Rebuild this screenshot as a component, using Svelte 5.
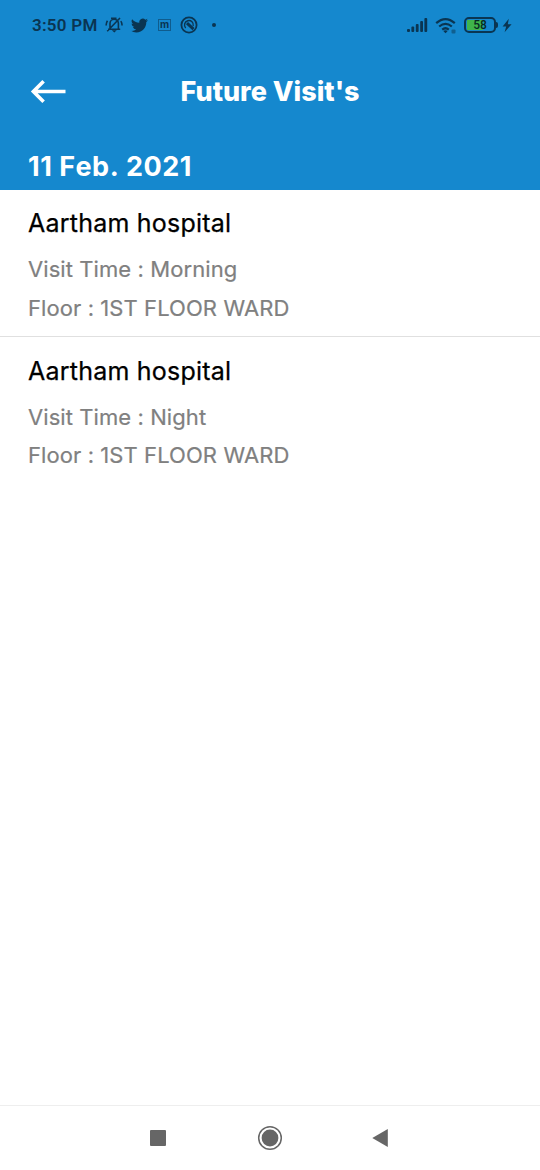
<script>
  const date = '11 Feb. 2021';
  const battery = 58;

  const visits = [
    { hospital: 'Aartham hospital', time: 'Morning', floor: '1ST FLOOR WARD' },
    { hospital: 'Aartham hospital', time: 'Night', floor: '1ST FLOOR WARD' }
  ];
</script>

<div class="screen">
  <header>
    <div class="status">
      <span class="clock">3:50 PM</span>
      <!-- muted bell -->
      <svg class="bell" width="18" height="18" viewBox="0 0 18 18" fill="none" stroke="currentColor" stroke-width="1.6">
        <path d="M3 13.2h12.2M5 13V7.5a4.2 4.2 0 0 1 8.4 0V13M6 2.2h5.5M2.2 15.2L15 2M1.2 9.5Q1 7 2.5 4.8M17 9.5q.2-2.5-1.2-4.4" />
        <path d="M6.8 14.2h5L9.3 16.6z" fill="currentColor" stroke="none" />
      </svg>
      <svg class="bird" width="17" height="17" viewBox="0 0 24 24" fill="currentColor">
        <path d="M23.95 4.57a10 10 0 0 1-2.82.78 4.96 4.96 0 0 0 2.16-2.73c-.95.56-2 .96-3.13 1.19a4.92 4.92 0 0 0-8.38 4.48A13.9 13.9 0 0 1 1.64 3.16a4.92 4.92 0 0 0 1.52 6.57 4.9 4.9 0 0 1-2.23-.61v.06a4.92 4.92 0 0 0 3.95 4.83 5 5 0 0 1-2.21.08 4.94 4.94 0 0 0 4.6 3.42A9.87 9.87 0 0 1 0 19.54a13.99 13.99 0 0 0 7.55 2.21c9.14 0 14.31-7.72 14.01-14.65a10 10 0 0 0 2.39-2.53z" />
      </svg>
      <span class="app-m">m</span>
      <svg class="ring" width="18" height="18" viewBox="0 0 18 18" fill="none" stroke="currentColor">
        <circle cx="9" cy="9" r="7.6" stroke-width="1.8" />
        <path d="M5.7 12A4.4 4.4 0 1 1 13.2 10" stroke-width="1.4" />
        <path d="M7 7.2l6.5 6" stroke-width="3" />
      </svg>
      <i class="dot"></i>
      <span class="grow"></span>
      <svg class="signal" width="22" height="16" viewBox="0 0 22 16" fill="currentColor">
        <rect x="1" y="12" width="3" height="3" rx="1" />
        <rect x="5.4" y="9.5" width="2.8" height="5.5" rx="1" />
        <rect x="9.8" y="7" width="2.8" height="8" rx="1" />
        <rect x="14.2" y="4" width="2.8" height="11" rx="1" />
        <rect x="18.4" y="1" width="2.8" height="14" rx="1" />
      </svg>
      <svg class="wifi" width="22" height="17" viewBox="0 0 22 17" fill="none" stroke="currentColor" stroke-width="2.2">
        <path d="M1.2 6.2q9.3-8.2 18.6 0M4.2 9.5q6.3-5.4 12.6 0M7.2 12.6q3.3-2.7 6.6 0" />
        <path d="M8.3 14q2.2-1.5 4.4 0l-2.2 2.3z" fill="currentColor" stroke="none" />
        <rect x="16.5" y="12.5" width="4" height="4" rx="1" fill="currentColor" stroke="none" opacity=".5" />
      </svg>
      <span class="battery">
        <i class="level" style="width: {battery}%"></i>
        <b>{battery}</b>
      </span>
      <i class="cap"></i>
      <svg class="bolt" width="10" height="15" viewBox="0 0 10 15" fill="currentColor">
        <path d="M6.8.8L.6 8.4h3.6L2.6 14.2 9.6 6.2H5.8z" />
      </svg>
    </div>

    <div class="bar">
      <button aria-label="Back">
        <svg width="36" height="26" viewBox="0 0 36 26" fill="none" stroke="#fff" stroke-width="3.6">
          <path d="M3 12.5h32.5M13.6 2.3L3.4 12.5l10.2 10.2" />
        </svg>
      </button>
      <h1>Future Visit's</h1>
    </div>
    <h2>{date}</h2>
  </header>

  <main>
    {#each visits as visit}
      <article>
        <h3>{visit.hospital}</h3>
        <p>Visit Time : {visit.time}</p>
        <p>Floor : {visit.floor}</p>
      </article>
    {/each}
  </main>

  <nav>
    <svg width="16" height="16" viewBox="0 0 16 16"><rect width="16" height="16" rx="1" /></svg>
    <svg class="home" width="26" height="26" viewBox="0 0 26 26">
      <circle cx="13" cy="13" r="11.3" fill="none" stroke="#666" stroke-width="1.5" />
      <circle cx="13" cy="13" r="8.4" />
    </svg>
    <svg width="16" height="20" viewBox="0 0 16 20"><path d="M.3 10L15.8 1v18z" /></svg>
  </nav>
</div>

<style>
  :global(body) { margin: 0; background: #fff; }
  .screen { display: flex; flex-direction: column; height: 1170px; font-family: Inter, sans-serif; font-feature-settings: 'calt' 0; }
  h1, h2, h3, p { margin: 0; white-space: nowrap; }

  header { height: 190px; background: #1588ce; color: #fff; }
  .status { display: flex; align-items: center; height: 50px; padding: 0 28px 0 32px; box-sizing: border-box; color: #0a3552; }
  .status svg { display: block; flex: none; }
  .clock { width: 73px; font-family: Roboto, sans-serif; font-size: 17px; font-weight: 600; letter-spacing: .25px; white-space: nowrap; }
  .bird { margin-left: 8px; }
  .app-m { display: flex; align-items: center; justify-content: center; box-sizing: border-box; width: 13px; height: 12px; margin-left: 10px; border: 1px solid #0f5c8d; font-size: 10px; font-weight: 700; line-height: 10px; padding-bottom: 2px; }
  .ring { margin-left: 9px; }
  .dot { width: 4px; height: 4px; margin-left: 14px; border-radius: 50%; background: currentColor; }
  .grow { flex: 1; }
  .wifi { margin-left: 7px; }
  .battery { position: relative; display: flex; align-items: center; justify-content: center; box-sizing: border-box; width: 32px; height: 16px; margin-left: 7px; border: 2px solid currentColor; border-radius: 5px; overflow: hidden; }
  .level { position: absolute; top: 1px; bottom: 1px; left: 1px; background: #3fb54a; }
  .battery b { position: relative; font-family: Roboto, sans-serif; font-size: 12px; font-weight: 500; line-height: 12px; color: #062b22; }
  .cap { width: 2px; height: 6px; border-radius: 0 2px 2px 0; background: currentColor; }
  .bolt { margin-left: 4px; }

  .bar { display: grid; grid-template-columns: 96px 1fr 96px; align-items: center; height: 84px; }
  button { display: flex; padding: 0 0 0 30px; border: 0; background: none; }
  h1 { text-align: center; font-size: 27px; font-weight: 800; line-height: 34px; }
  h2 { padding: 16px 28px 0; font-size: 27px; font-weight: 700; font-kerning: none; letter-spacing: .5px; line-height: 34px; }

  article { box-sizing: border-box; height: 147px; padding: 17px 28px 0; border-bottom: 1px solid #e0e0e0; }
  article:last-child { padding-top: 17.5px; border-bottom: 0; }
  h3 { margin-bottom: 10px; font-size: 25px; font-weight: 400; letter-spacing: .22px; line-height: 33px; color: #000; -webkit-text-stroke: .25px; }
  p { font-size: 22px; font-weight: 400; letter-spacing: .08px; line-height: 38.5px; color: #808080; -webkit-text-stroke: .2px; }
  main { flex: 1; }

  nav { display: flex; align-items: center; justify-content: space-between; box-sizing: border-box; height: 65px; padding: 0 152px 0 150px; border-top: 1px solid #eee; fill: #666; }
  .home { margin-left: 2px; }
</style>
